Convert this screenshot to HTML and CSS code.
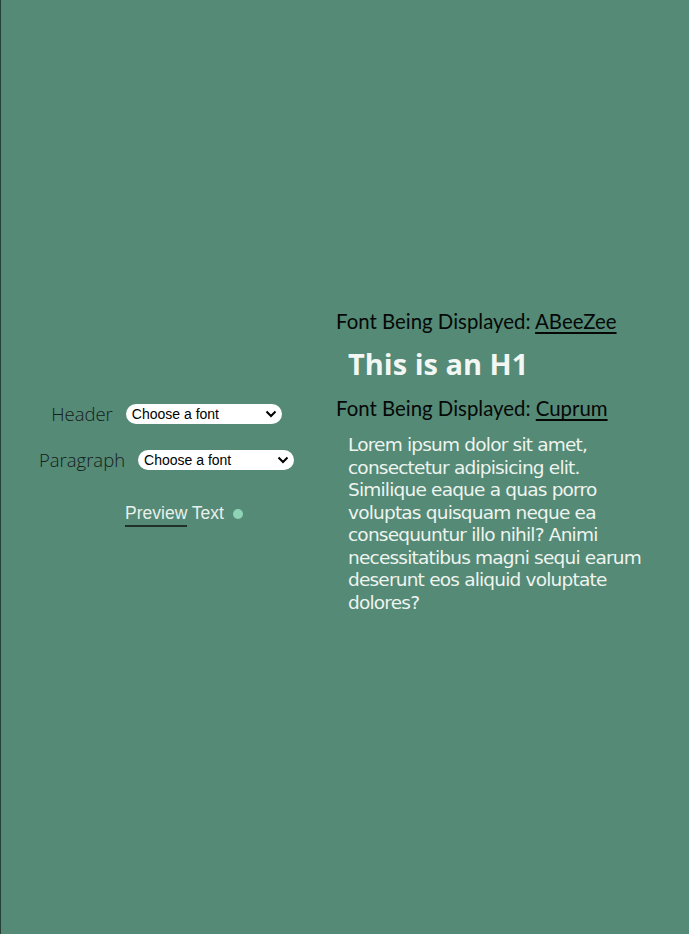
FILE: index.html
```html
<!DOCTYPE html>
<html>
<head>
<meta charset="utf-8">
<link rel="stylesheet" href="styles.css">
</head>
<body>
<div class="page">
  <div class="controls">
    <div class="row">
      <label class="lbl">Header</label>
      <div class="sel"><span>Choose a font</span><svg width="12" height="8" viewBox="0 0 12 8"><path d="M1.5 1.5 L6 6 L10.5 1.5" fill="none" stroke="#000" stroke-width="2"/></svg></div>
    </div>
    <div class="row">
      <label class="lbl">Paragraph</label>
      <div class="sel"><span>Choose a font</span><svg width="12" height="8" viewBox="0 0 12 8"><path d="M1.5 1.5 L6 6 L10.5 1.5" fill="none" stroke="#000" stroke-width="2"/></svg></div>
    </div>
    <div class="preview-row">
      <span class="preview"><span class="ul">Preview</span> Text</span>
      <span class="dot"></span>
    </div>
  </div>
  <div class="display">
    <div class="fontname">Font Being Displayed: <u>ABeeZee</u></div>
    <h1 class="h1">This is an H1</h1>
    <div class="fontname">Font Being Displayed: <u>Cuprum</u></div>
    <p class="para">Lorem ipsum dolor sit amet, consectetur adipisicing elit. Similique eaque a quas porro voluptas quisquam neque ea consequuntur illo nihil? Animi necessitatibus magni sequi earum deserunt eos aliquid voluptate dolores?</p>
  </div>
</div>
</body>
</html>
```
FILE: styles.css
```css
html, body {
  margin: 0;
  padding: 0;
}
body {
  background: #548a76;
  border-left: 1px solid #244038;
  height: 934px;
  box-sizing: border-box;
  overflow: hidden;
}
.page {
  display: flex;
  align-items: center;
  height: 934px;
}
.controls {
  width: 334px;
  display: flex;
  flex-direction: column;
  align-items: center;
  padding-bottom: 6px;
}
.row {
  display: flex;
  align-items: center;
  gap: 13px;
  height: 24px;
  margin-bottom: 22px;
}
.lbl {
  font-family: "Open Sans", sans-serif;
  font-weight: 300;
  font-size: 18.5px;
  color: #14201b;
  margin-left: -3px;
}
.sel {
  width: 156px;
  height: 20px;
  background: #fff;
  border-radius: 10px;
  display: flex;
  align-items: center;
  justify-content: space-between;
  padding: 0 5px 0 6px;
  box-sizing: border-box;
  font-family: "Liberation Sans", Arial, sans-serif;
  font-size: 14px;
  color: #000;
}
.preview-row {
  display: flex;
  align-items: center;
  gap: 9px;
  margin-top: 9px;
  margin-left: 32px;
}
.preview {
  font-family: "Liberation Sans", Arial, sans-serif;
  font-size: 17.5px;
  color: #e8f0ea;
}
.ul {
  display: inline-block;
  border-bottom: 2px solid #22302a;
  padding-bottom: 2px;
  line-height: 20px;
}
.dot {
  width: 10px;
  height: 10px;
  border-radius: 50%;
  background: #8fd3b6;
  margin-top: -2px;
}
.display {
  padding-left: 1px;
  display: flex;
  flex-direction: column;
  margin-bottom: 10px;
}
.fontname {
  font-family: "Lato", "Open Sans", sans-serif;
  font-size: 20.4px;
  color: #050807;
  line-height: 22px;
}
.fontname u {
  text-underline-offset: 3px;
}
.h1 {
  margin: 15px 0 16px 12px;
  font-family: "Open Sans", sans-serif;
  font-weight: 700;
  font-size: 29px;
  line-height: 34px;
  color: #f2f7f3;
}
.para {
  margin: 15px 0 0 12px;
  width: 302px;
  font-family: "DejaVu Sans", sans-serif;
  font-size: 18.5px;
  letter-spacing: -0.8px;
  line-height: 22.5px;
  color: #eef4ef;
}
```
